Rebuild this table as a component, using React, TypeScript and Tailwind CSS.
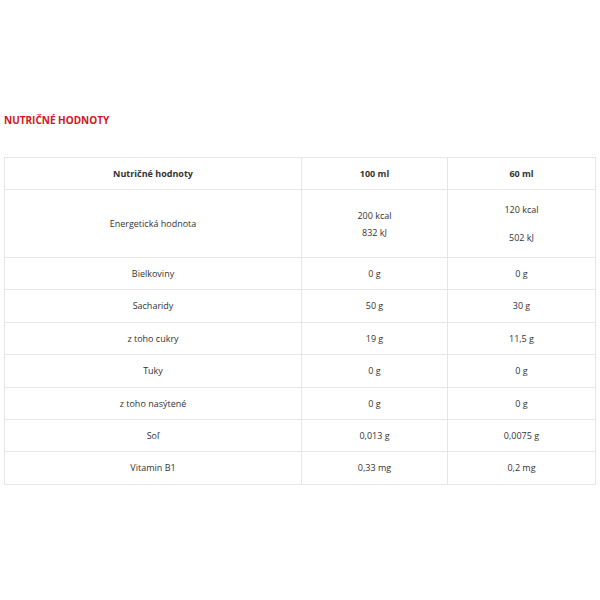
const ROWS: [string, React.ReactNode, React.ReactNode][] = [
  ["Bielkoviny", "0 g", "0 g"],
  ["Sacharidy", "50 g", "30 g"],
  ["z toho cukry", "19 g", "11,5 g"],
  ["Tuky", "0 g", "0 g"],
  ["z toho nasýtené", "0 g", "0 g"],
  ["Soľ", "0,013 g", "0,0075 g"],
  ["Vitamin B1", "0,33 mg", "0,2 mg"],
];

export default function App() {
  return (
    <div
      className="w-[600px] h-[600px] bg-white text-[#333] px-[4px] pt-[113px]"
      style={{ fontFamily: '"Open Sans", "Liberation Sans", sans-serif' }}
    >
      <h2 className="text-[10px] font-bold text-[#d8131b] leading-[14px]">
        NUTRIČNÉ HODNOTY
      </h2>

      <table className="mt-[30px] w-[592px] border-collapse text-[9px] text-center">
        <colgroup>
          <col className="w-[297px]" />
          <col className="w-[146px]" />
          <col />
        </colgroup>
        <thead>
          <tr className="h-[32px]">
            <th className="border border-[#e6e6e6] font-bold">Nutričné hodnoty</th>
            <th className="border border-[#e6e6e6] font-bold">100 ml</th>
            <th className="border border-[#e6e6e6] font-bold">60 ml</th>
          </tr>
        </thead>
        <tbody>
          <tr className="h-[68px]">
            <td className="border border-[#e6e6e6]">Energetická hodnota</td>
            <td className="border border-[#e6e6e6]">
              <div className="leading-[17px]">200 kcal</div>
              <div className="leading-[17px]">832 kJ</div>
            </td>
            <td className="border border-[#e6e6e6]">
              <div className="leading-[14px]">120 kcal</div>
              <div className="leading-[14px] mt-[14px]">502 kJ</div>
            </td>
          </tr>
          {ROWS.map(([name, a, b]) => (
            <tr key={name} className="h-[32.4px]">
              <td className="border border-[#e6e6e6]">{name}</td>
              <td className="border border-[#e6e6e6]">{a}</td>
              <td className="border border-[#e6e6e6]">{b}</td>
            </tr>
          ))}
        </tbody>
      </table>
    </div>
  );
}
